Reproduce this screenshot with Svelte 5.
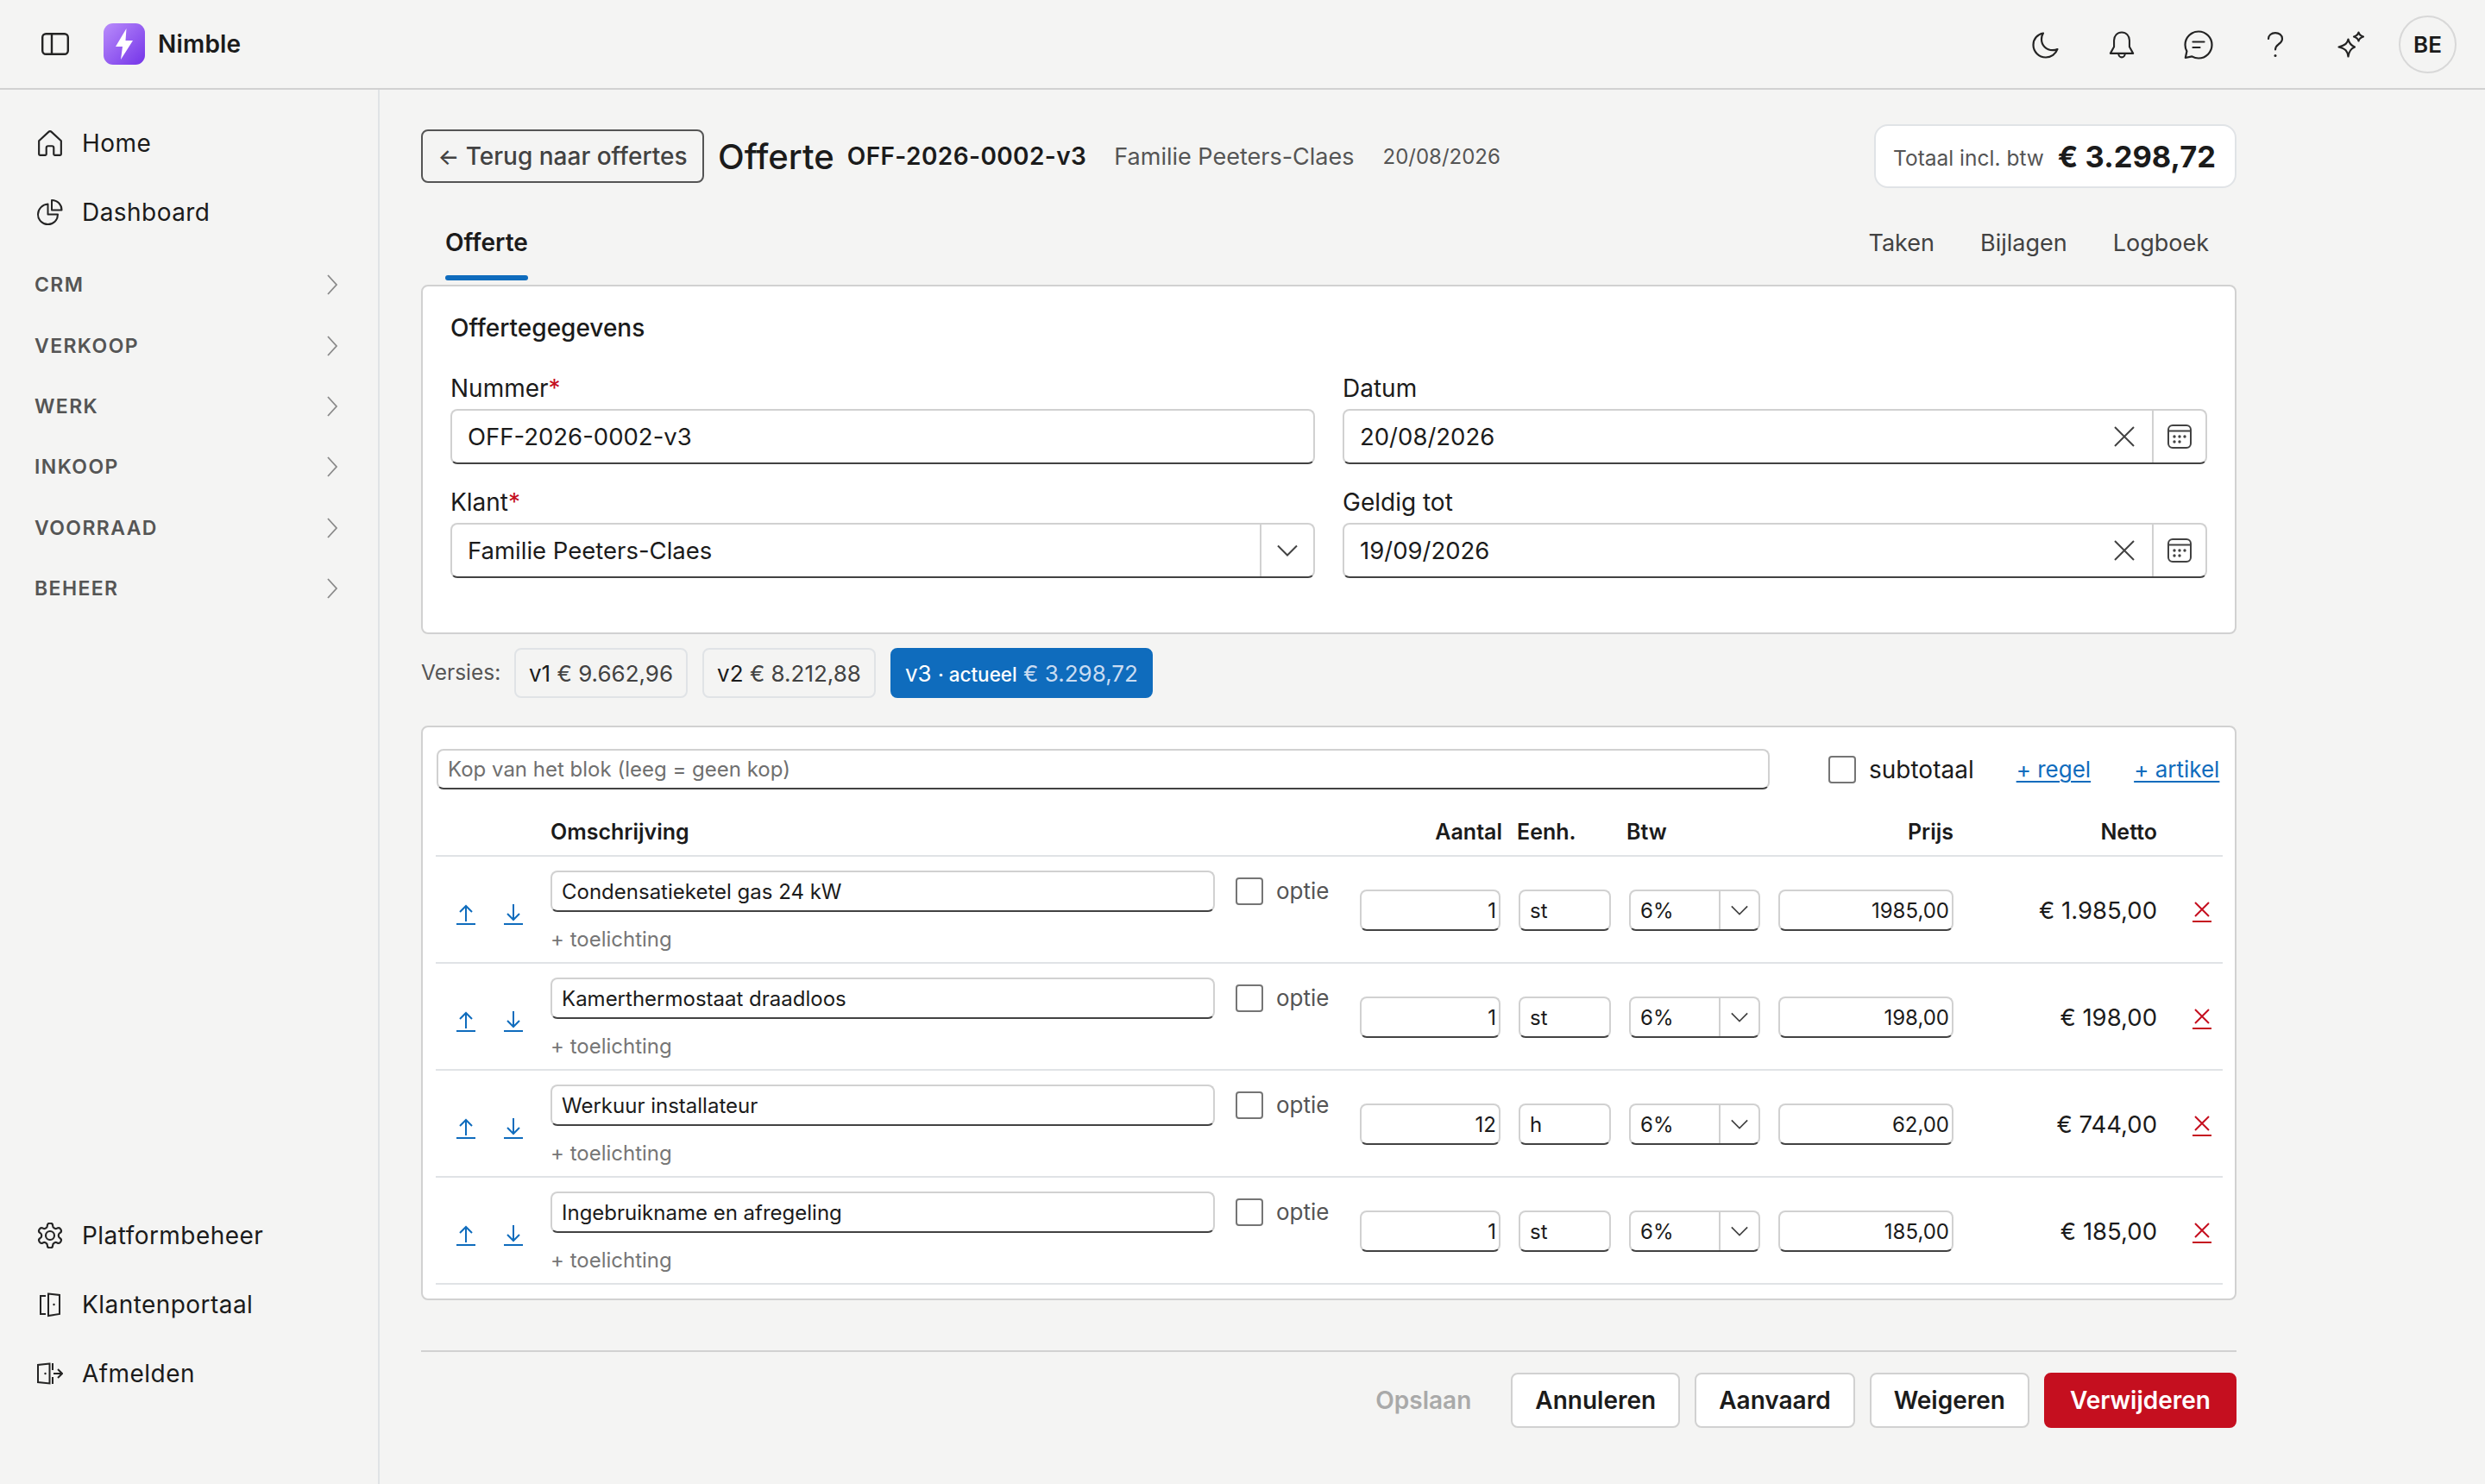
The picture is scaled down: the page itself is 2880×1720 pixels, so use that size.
<script>
  const groups = ['CRM', 'VERKOOP', 'WERK', 'INKOOP', 'VOORRAAD', 'BEHEER'];

  const versions = [
    { name: 'v1', total: '€ 9.662,96' },
    { name: 'v2', total: '€ 8.212,88' },
  ];

  const lines = [
    { desc: 'Condensatieketel gas 24 kW', qty: '1', unit: 'st', price: '1985,00', net: '€ 1.985,00' },
    { desc: 'Kamerthermostaat draadloos', qty: '1', unit: 'st', price: '198,00', net: '€ 198,00' },
    { desc: 'Werkuur installateur', qty: '12', unit: 'h', price: '62,00', net: '€ 744,00' },
    { desc: 'Ingebruikname en afregeling', qty: '1', unit: 'st', price: '185,00', net: '€ 185,00' },
  ];
</script>

{#snippet clearIcon()}
  <svg class="clear" viewBox="0 0 24 24" fill="none" stroke="currentColor" stroke-width="2"><path d="M1 1l22 22M23 1L1 23" /></svg>
{/snippet}

{#snippet calendarIcon()}
  <svg class="cal" viewBox="0 0 28 28" fill="none" stroke="currentColor" stroke-width="2">
    <rect x="1" y="1" width="26" height="26" rx="5" />
    <path d="M1 7.5h26" />
    <g fill="currentColor" stroke="none">
      <circle cx="8" cy="14" r="1.7" /><circle cx="14" cy="14" r="1.7" /><circle cx="20" cy="14" r="1.7" />
      <circle cx="8" cy="20" r="1.7" /><circle cx="14" cy="20" r="1.7" />
    </g>
  </svg>
{/snippet}

{#snippet chevronDown(cls)}
  <svg class={cls} viewBox="0 0 24 14" fill="none" stroke="currentColor" stroke-width="2"><path d="M1 1.5l11 11 11-11" /></svg>
{/snippet}

<div class="app">
  <header class="topbar">
    <div class="brand">
      <svg class="panel" viewBox="0 0 32 26" fill="none" stroke="#242424" stroke-width="2.4">
        <rect x="1.2" y="1.2" width="29.6" height="23.6" rx="4" />
        <path d="M12 1.2v23.6" />
      </svg>
      <div class="logo">
        <svg viewBox="0 0 20 36" width="20" height="36"><path d="M12.5 0L0 21h8L6 36 20 14h-8.5z" fill="#fff" /></svg>
      </div>
      <span class="brand-name">Nimble</span>
    </div>
    <div class="top-actions">
      <svg class="ti" viewBox="0 0 32 32" fill="none" stroke="#242424" stroke-width="2.2" stroke-linejoin="round">
        <path d="M13 2.5C6.5 3.5 1.5 9 1.5 16c0 7.8 6.3 14.5 14.5 14.5 6.200 0 11.500-3.900 13.500-9.500-1.500.8-3.500 1.200-5.500 1.200C16.500 22.200 11 16.500 11 9.500c0-2.500.7-5 2-7z" />
      </svg>
      <svg class="ti" viewBox="0 0 32 34" fill="none" stroke="#242424" stroke-width="2.2" stroke-linejoin="round">
        <path d="M16 1.500c-5.500 0-9.500 4.300-9.500 10v8L2 27.500h28L25.500 19.500v-8c0-5.700-4-10-9.500-10z" />
        <path d="M12 27.500c0 2.800 1.800 4.800 4 4.800s4-2 4-4.800" />
      </svg>
      <svg class="ti chat" viewBox="0 0 34 34" fill="none" stroke="#242424" stroke-width="2.2" stroke-linejoin="round" stroke-linecap="round">
        <path d="M17 1.500C8.500 1.500 1.500 8.500 1.500 17c0 2.700.7 5.200 1.900 7.400L1.800 32l7.600-1.600c2.300 1.300 4.900 2.100 7.600 2.100 8.500 0 15.500-7 15.500-15.500S25.500 1.500 17 1.500z" />
        <path d="M10.500 13.500h13M10.500 20h8" />
      </svg>
      <svg class="ti q" viewBox="0 0 20 30" fill="none" stroke="#242424" stroke-width="2.200" stroke-linecap="round">
        <path d="M2 8c0-4.200 3.500-6.900 8-6.900 4.300 0 8 2.700 8 6.900 0 3.200-2.100 4.700-4.300 6.300-2.300 1.700-3.700 3-3.700 6.200" />
        <circle cx="10" cy="27.500" r="1.500" fill="#242424" stroke="none" />
      </svg>
      <svg class="ti" viewBox="0 0 32 32" fill="none" stroke="#242424" stroke-width="2.200" stroke-linejoin="round">
        <path d="M12.500 9.500c1 4.500 3 7 7.500 9-4.500 2-6.500 4.500-7.500 11-1-6.500-3-9-11-11 8-2 10-4.500 11-9z" />
        <path d="M24.500 1.500c.6 2.600 1.700 3.800 5.500 5-3.800 1.200-4.900 2.400-5.500 5-.6-2.600-1.700-3.800-5.500-5 3.800-1.200 4.900-2.400 5.500-5z" />
      </svg>
      <div class="avatar">BE</div>
    </div>
  </header>

  <div class="body">
    <nav class="sidebar">
      <div>
        <a class="nav-item">
          <svg viewBox="0 0 28 28" fill="none" stroke="#242424" stroke-width="2" stroke-linejoin="round">
            <path d="M2 11.500L12.200 2a2.600 2.600 0 0 1 3.600 0L26 11.500V26a1 1 0 0 1-1 1h-6a1 1 0 0 1-1-1v-7a2 2 0 0 0-2-2h-4a2 2 0 0 0-2 2v7a1 1 0 0 1-1 1H3a1 1 0 0 1-1-1z" />
          </svg>
          Home
        </a>
        <a class="nav-item">
          <svg viewBox="0 0 30 30" fill="none" stroke="#242424" stroke-width="2" stroke-linejoin="round">
            <path d="M12.500 5.500C6 6 1 11.200 1 17.500 1 24 6.300 29 12.500 29 19 29 24 24 24 17.500H12.500z" />
            <path d="M17 1v11.500h11.500C28.500 6 23.500 1 17 1z" />
          </svg>
          Dashboard
        </a>
        <div class="groups">
          {#each groups as group}
            <div class="group">
              <span>{group}</span>
              <svg viewBox="0 0 12 24" fill="none" stroke="#8a8a8a" stroke-width="1.800"><path d="M1 1l10 11L1 23" /></svg>
            </div>
          {/each}
        </div>
      </div>
      <div class="nav-bottom">
        <a class="nav-item">
          <svg viewBox="1.500 1.500 21 21" fill="none" stroke="#242424" stroke-width="1.500">
            <path d="M12.220 2h-.44a2 2 0 0 0-2 2v.18a2 2 0 0 1-1 1.730l-.43.250a2 2 0 0 1-2 0l-.15-.08a2 2 0 0 0-2.730.730l-.22.380a2 2 0 0 0 .730 2.730l.15.100a2 2 0 0 1 1 1.720v.510a2 2 0 0 1-1 1.740l-.15.090a2 2 0 0 0-.730 2.730l.22.380a2 2 0 0 0 2.730.730l.15-.08a2 2 0 0 1 2 0l.43.250a2 2 0 0 1 1 1.730V20a2 2 0 0 0 2 2h.44a2 2 0 0 0 2-2v-.18a2 2 0 0 1 1-1.730l.43-.25a2 2 0 0 1 2 0l.15.080a2 2 0 0 0 2.730-.730l.22-.390a2 2 0 0 0-.730-2.730l-.15-.08a2 2 0 0 1-1-1.740v-.5a2 2 0 0 1 1-1.740l.15-.09a2 2 0 0 0 .730-2.730l-.22-.38a2 2 0 0 0-2.730-.730l-.15.080a2 2 0 0 1-2 0l-.43-.25a2 2 0 0 1-1-1.730V4a2 2 0 0 0-2-2z" />
            <circle cx="12" cy="12" r="3.500" />
          </svg>
          Platformbeheer
        </a>
        <a class="nav-item">
          <svg viewBox="0 0 28 30" fill="none" stroke="#242424" stroke-width="2" stroke-linejoin="miter">
            <path d="M9 5H3v21h6" />
            <path d="M12 2.500L25 4v22l-13 2z" />
            <circle cx="18.500" cy="15" r="1.200" fill="#242424" stroke="none" />
          </svg>
          Klantenportaal
        </a>
        <a class="nav-item">
          <svg viewBox="0 0 30 26" fill="none" stroke="#242424" stroke-width="2">
            <path d="M14.500 1.500L1 3v20l13.500 1.500z" />
            <circle cx="9.500" cy="13" r="1.200" fill="#242424" stroke="none" />
            <path d="M18 1v8M18 17v8M19 13h10M24 8l5 5-5 5" />
          </svg>
          Afmelden
        </a>
      </div>
    </nav>

    <main class="main">
      <div class="title-row">
        <button class="back"><span class="arrow">←</span> Terug naar offertes</button>
        <h1>Offerte</h1>
        <span class="number">OFF-2026-0002-v3</span>
        <span class="customer">Familie Peeters-Claes</span>
        <span class="date">20/08/2026</span>
        <div class="total">
          <span class="total-label">Totaal incl. btw</span>
          <strong>€ 3.298,72</strong>
        </div>
      </div>

      <div class="tabs">
        <span class="tab active">Offerte</span>
        <div class="tabs-right">
          <span class="tab">Taken</span>
          <span class="tab">Bijlagen</span>
          <span class="tab">Logboek</span>
        </div>
      </div>

      <section class="card details">
        <h2>Offertegegevens</h2>
        <div class="form-grid">
          <div class="field">
            <label>Nummer<i>*</i></label>
            <div class="control"><input value="OFF-2026-0002-v3" /></div>
          </div>
          <div class="field">
            <label>Datum</label>
            <div class="control">
              <input value="20/08/2026" />
              <span class="clear-wrap">{@render clearIcon()}</span>
              <span class="addon">{@render calendarIcon()}</span>
            </div>
          </div>
          <div class="field">
            <label>Klant<i>*</i></label>
            <div class="control">
              <input value="Familie Peeters-Claes" />
              <span class="addon">{@render chevronDown('chev')}</span>
            </div>
          </div>
          <div class="field">
            <label>Geldig tot</label>
            <div class="control">
              <input value="19/09/2026" />
              <span class="clear-wrap">{@render clearIcon()}</span>
              <span class="addon">{@render calendarIcon()}</span>
            </div>
          </div>
        </div>
      </section>

      <div class="versions">
        <span class="versions-label">Versies:</span>
        {#each versions as v}
          <button class="version">{v.name} <span class="muted">{v.total}</span></button>
        {/each}
        <button class="version current">v3 <small>· actueel</small> <span class="soft">€ 3.298,72</span></button>
      </div>

      <section class="card block">
        <div class="block-head">
          <input class="block-title" placeholder="Kop van het blok (leeg = geen kop)" />
          <span class="box big"></span>
          <span class="subtotal">subtotaal</span>
          <a class="link regel">+ regel</a>
          <a class="link artikel">+ artikel</a>
        </div>

        <div class="row head-row">
          <span></span>
          <span>Omschrijving</span>
          <span class="num">Aantal</span>
          <span class="unit-head">Eenh.</span>
          <span class="btw-head">Btw</span>
          <span class="num">Prijs</span>
          <span class="num">Netto</span>
          <span></span>
        </div>

        {#each lines as line}
          <div class="row line">
            <div class="moves">
              <svg viewBox="0 0 22 24" fill="none" stroke="#0f6cbd" stroke-width="2"><path d="M11 20V2M4 9l7-7 7 7M0 23h22" /></svg>
              <svg viewBox="0 0 22 24" fill="none" stroke="#0f6cbd" stroke-width="2"><path d="M11 0v18M4 11l7 7 7-7M0 23h22" /></svg>
            </div>
            <div class="desc">
              <div class="desc-top">
                <div class="control small desc-input"><input value={line.desc} /></div>
                <span class="box"></span>
                <span class="optie">optie</span>
              </div>
              <span class="toel">+ toelichting</span>
            </div>
            <div class="control small"><input class="right" value={line.qty} /></div>
            <div class="control small"><input value={line.unit} /></div>
            <div class="control small">
              <input value="6%" />
              <span class="addon">{@render chevronDown('chev small-chev')}</span>
            </div>
            <div class="control small"><input class="right" value={line.price} /></div>
            <span class="net">{line.net}</span>
            <a class="del">
              <svg viewBox="0 0 22 24" fill="none" stroke="#c50f1f" stroke-width="2"><path d="M3 1l16 16M19 1L3 17M0 23h22" /></svg>
            </a>
          </div>
        {/each}
      </section>

      <footer class="actions">
        <span class="save">Opslaan</span>
        <button class="btn">Annuleren</button>
        <button class="btn">Aanvaard</button>
        <button class="btn">Weigeren</button>
        <button class="btn danger">Verwijderen</button>
      </footer>
    </main>
  </div>
</div>

<style>
  :global(body) {
    margin: 0;
    background: #f4f4f3;
    font-family: Inter, 'Noto Sans', sans-serif;
    color: #1b1b1b;
  }

  .app {
    width: 2880px;
    height: 1720px;
    display: flex;
    flex-direction: column;
    overflow: hidden;
  }

  .topbar {
    height: 102px;
    flex: none;
    border-bottom: 2px solid #d1d1d1;
    display: flex;
    align-items: center;
    justify-content: space-between;
    padding: 0 33px 0 48px;
  }

  .brand {
    display: flex;
    align-items: center;
  }

  .panel {
    width: 32px;
    height: 26px;
  }

  .logo {
    width: 48px;
    height: 48px;
    margin-left: 40px;
    border-radius: 11px;
    background: linear-gradient(135deg, #b98cfb, #7434e8);
    display: flex;
    align-items: center;
    justify-content: center;
  }

  .brand-name {
    margin-left: 15px;
    font-size: 28px;
    font-weight: 600;
    letter-spacing: 0.2px;
  }

  .top-actions {
    display: flex;
    align-items: center;
  }

  .ti {
    width: 32px;
    height: 32px;
    margin-right: 56px;
    margin-top: 2px;
  }

  .ti.chat {
    width: 34px;
    height: 34px;
    margin-right: 62px;
  }

  .ti.q {
    width: 20px;
    height: 30px;
    margin-right: 62px;
  }

  .avatar {
    width: 67px;
    height: 67px;
    box-sizing: border-box;
    margin-left: -17px;
    border: 2px solid #d8d8d8;
    border-radius: 50%;
    display: flex;
    align-items: center;
    justify-content: center;
    font-size: 26px;
    font-weight: 600;
  }

  .body {
    flex: 1;
    display: flex;
    min-height: 0;
  }

  .sidebar {
    width: 440px;
    flex: none;
    box-sizing: border-box;
    border-right: 2px solid #e0e3e6;
    padding: 22px 0 88px 43px;
    display: flex;
    flex-direction: column;
    justify-content: space-between;
  }

  .nav-item {
    height: 80px;
    display: flex;
    align-items: center;
    gap: 22px;
    font-size: 28px;
    letter-spacing: 0.45px;
  }

  .nav-item svg {
    width: 30px;
    height: 30px;
    flex: none;
  }

  .groups {
    margin-top: 9px;
    margin-left: -3px;
  }

  .group {
    height: 70.400px;
    width: 352px;
    display: flex;
    align-items: center;
    justify-content: space-between;
    font-size: 23px;
    font-weight: 600;
    letter-spacing: 1.400px;
    color: #555;
  }

  .group svg {
    width: 12px;
    height: 24px;
    margin-right: 1px;
  }

  .main {
    flex: 1;
    padding: 40px 288px 0 48px;
    min-width: 0;
  }

  .title-row {
    display: flex;
    align-items: center;
    height: 74px;
  }

  .back {
    height: 62px;
    width: 328px;
    flex: none;
    box-sizing: border-box;
    border: 2px solid #555;
    border-radius: 8px;
    background: transparent;
    color: #424242;
    font: 500 28px Inter, sans-serif;
    padding: 0;
    white-space: nowrap;
  }

  .arrow {
    font-size: 26px;
  }

  h1 {
    margin: 0 0 0 16px;
    font-size: 40px;
    font-weight: 500;
    white-space: nowrap;
  }

  .number {
    margin-left: 15px;
    font-size: 28px;
    font-weight: 600;
    letter-spacing: 0.4px;
    white-space: nowrap;
  }

  .customer {
    margin-left: 32px;
    font-size: 27px;
    color: #555;
    white-space: nowrap;
  }

  .date {
    margin-left: 33px;
    font-size: 24px;
    color: #555;
  }

  .total {
    margin-left: auto;
    width: 420px;
    height: 74px;
    box-sizing: border-box;
    flex: none;
    border: 2px solid #e0e3e6;
    border-radius: 16px;
    background: #fff;
    display: flex;
    align-items: center;
    justify-content: flex-end;
    gap: 16px;
    padding-right: 22px;
  }

  .total-label {
    font-size: 24.500px;
    color: #555;
    padding-top: 4px;
  }

  .total strong {
    font-size: 34.500px;
    font-weight: 700;
  }

  .tabs {
    height: 112px;
    display: flex;
    justify-content: space-between;
    align-items: stretch;
    box-sizing: border-box;
    padding: 0 32px 0 28px;
  }

  .tabs-right {
    display: flex;
    gap: 53px;
  }

  .tab {
    font-size: 27px;
    color: #424242;
    display: flex;
    align-items: center;
    position: relative;
    padding-top: 14px;
    height: 100%;
    box-sizing: border-box;
  }

  .tab.active {
    font-size: 28px;
    font-weight: 600;
    color: #1b1b1b;
  }

  .tab.active::after {
    content: '';
    position: absolute;
    left: 0;
    right: 0;
    bottom: 5px;
    height: 6px;
    border-radius: 3px;
    background: #0f6cbd;
  }

  .card {
    background: #fff;
    border: 2px solid #d1d1d1;
    border-radius: 8px;
    box-sizing: border-box;
  }

  .details {
    height: 405px;
    padding: 31px 32px 0;
  }

  h2 {
    margin: 0;
    font-size: 28px;
    font-weight: 500;
    line-height: 34px;
  }

  .form-grid {
    margin-top: 32px;
    display: grid;
    grid-template-columns: 1002px 1002px;
    column-gap: 32px;
    row-gap: 23px;
  }

  .field label {
    display: block;
    font-size: 28px;
    line-height: 42px;
    height: 45px;
  }

  .field i {
    color: #c50f1f;
    font-style: normal;
  }

  .control {
    height: 64px;
    box-sizing: border-box;
    display: flex;
    align-items: center;
    background: #fff;
    border: 2px solid #d1d1d1;
    border-bottom-color: #424242;
    border-radius: 8px;
    min-width: 0;
  }

  .control input {
    flex: 1;
    min-width: 0;
    width: 100%;
    height: 100%;
    box-sizing: border-box;
    border: 0;
    outline: 0;
    background: transparent;
    padding: 0 18px;
    font: 400 27.500px Inter, sans-serif;
    color: #1b1b1b;
  }

  .clear-wrap {
    display: flex;
    color: #424242;
    margin-right: 20px;
  }

  .clear {
    width: 24px;
    height: 24px;
  }

  .addon {
    flex: none;
    width: 62px;
    align-self: stretch;
    box-sizing: border-box;
    border-left: 2px solid #d1d1d1;
    display: flex;
    align-items: center;
    justify-content: center;
    color: #424242;
  }

  .cal {
    width: 28px;
    height: 28px;
  }

  .chev {
    width: 24px;
    height: 14px;
  }

  .versions {
    height: 58px;
    margin-top: 16px;
    display: flex;
    align-items: center;
    gap: 17px;
  }

  .versions-label {
    width: 91px;
    font-size: 24.500px;
    color: #555;
    padding-bottom: 2px;
  }

  .version {
    height: 58px;
    box-sizing: border-box;
    border: 2px solid #e0e3e6;
    border-radius: 8px;
    background: #f4f4f3;
    font: 400 26px Inter, sans-serif;
    color: #1b1b1b;
    padding: 0 15px;
    white-space: nowrap;
  }

  .muted {
    color: #424242;
  }

  .version.current {
    background: #0f6cbd;
    border-color: #0f6cbd;
    color: #fff;
  }

  .version small {
    font-size: 22.500px;
    font-weight: 500;
  }

  .soft {
    color: #c9dcf2;
  }

  .block {
    margin-top: 32px;
    height: 666px;
    padding: 25px 14px 0 15px;
  }

  .block-head {
    display: flex;
    align-items: center;
    height: 47px;
    padding-left: 1px;
  }

  .block-title {
    width: 1545px;
    height: 47px;
    box-sizing: border-box;
    flex: none;
    border: 2px solid #d1d1d1;
    border-bottom-color: #424242;
    border-radius: 8px;
    padding: 0 11px;
    font: 400 24px Inter, sans-serif;
    outline: 0;
  }

  .block-title::placeholder {
    color: #6f6f6f;
    opacity: 1;
  }

  .box {
    width: 32px;
    height: 32px;
    flex: none;
    box-sizing: border-box;
    border: 2px solid #757575;
    border-radius: 4px;
    background: #fff;
  }

  .block-head .box {
    margin-left: 68px;
  }

  .subtotal {
    margin-left: 15px;
    font-size: 28px;
    white-space: nowrap;
  }

  .link {
    color: #0f6cbd;
    text-decoration: underline;
    text-underline-offset: 4px;
    font-size: 26px;
    white-space: nowrap;
  }

  .regel {
    margin-left: 49px;
  }

  .artikel {
    margin-left: 50px;
  }

  .row {
    display: grid;
    grid-template-columns: 112px 917px 163px 107px 152px 203px 215px 53px;
    column-gap: 21px;
    align-items: center;
  }

  .head-row {
    height: 78px;
    padding-top: 21px;
    box-sizing: border-box;
    font-size: 25px;
    font-weight: 600;
    border-bottom: 2px solid #e0e3e6;
  }

  .head-row .num {
    text-align: right;
  }

  .head-row > span:nth-child(3) {
    margin-right: -2px;
  }

  .unit-head {
    margin-left: -2px;
  }

  .btw-head {
    margin-left: -3px;
  }

  .line {
    height: 124px;
    box-sizing: border-box;
    padding-top: 2px;
    border-bottom: 2px solid #e0e3e6;
    font-size: 26px;
  }

  .moves {
    display: flex;
    gap: 33px;
    padding: 9px 0 0 24px;
  }

  .moves svg {
    width: 22px;
    height: 24px;
    flex: none;
  }

  .desc {
    display: flex;
    flex-direction: column;
    align-self: start;
    padding-top: 14px;
  }

  .desc-top {
    display: flex;
    align-items: flex-start;
  }

  .control.small {
    height: 48px;
  }

  .control.small input {
    font-size: 24px;
    padding: 0 11px;
  }

  .control.small input.right {
    text-align: right;
    padding-right: 3px;
  }

  .control.small .addon {
    width: 46px;
  }

  .small-chev {
    width: 20px;
    height: 12px;
  }

  .desc-input {
    width: 770px;
    flex: none;
  }

  .desc .box {
    margin: 8px 0 0 24px;
  }

  .optie {
    margin: 8px 0 0 15px;
    color: #555;
  }

  .toel {
    margin-top: 17px;
    font-size: 24px;
    color: #767676;
  }

  .net {
    text-align: right;
    font-size: 27.500px;
  }

  .del {
    display: flex;
    justify-content: flex-end;
    padding: 4px 11px 0 0;
  }

  .del svg {
    width: 22px;
    height: 24px;
  }

  .actions {
    margin-top: 58px;
    padding-top: 24px;
    border-top: 2px solid #d1d1d1;
    display: flex;
    justify-content: flex-end;
    align-items: center;
    gap: 17px;
  }

  .save {
    color: #a9a9a9;
    font-size: 28px;
    font-weight: 600;
    margin-right: 29px;
  }

  .btn {
    height: 64px;
    box-sizing: border-box;
    border: 2px solid #d1d1d1;
    border-radius: 8px;
    background: #fff;
    font: 600 28px Inter, sans-serif;
    color: #1b1b1b;
    padding: 0 26px;
  }

  .btn.danger {
    background: #c50f1f;
    border-color: #c50f1f;
    color: #fff;
    padding: 0 28px;
  }
</style>
